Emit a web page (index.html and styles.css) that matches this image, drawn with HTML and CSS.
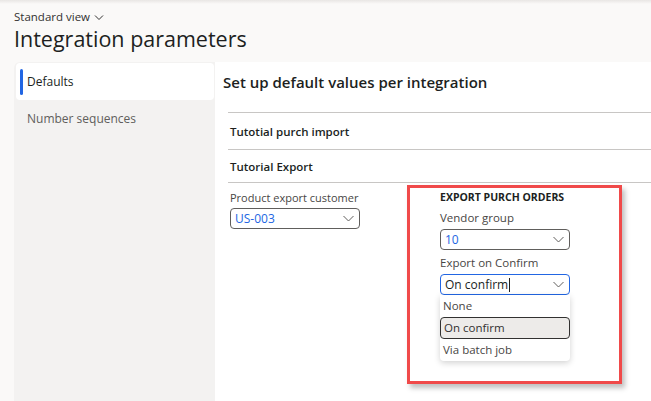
FILE: index.html
```html
<!DOCTYPE html>
<html>
<head>
<meta charset="utf-8">
<link rel="stylesheet" href="styles.css">
</head>
<body>
<div class="topbar"></div>
<header class="header">
  <div class="view">Standard view <svg class="chev-small" width="10" height="7" viewBox="0 0 10 7"><path d="M1 1.5 L5 5.5 L9 1.5" fill="none" stroke="#323130" stroke-width="1"/></svg></div>
  <h1 class="title">Integration parameters</h1>
</header>
<div class="layout">
  <nav class="nav">
    <div class="nav-item active"><span class="bar"></span>Defaults</div>
    <div class="nav-item">Number sequences</div>
  </nav>
  <main class="main">
    <h2 class="heading">Set up default values per integration</h2>
    <div class="sections">
      <div class="section">Tutotial purch import</div>
      <div class="section">Tutorial Export</div>
    </div>
    <div class="fields">
      <div class="col">
        <div class="label label-left">Product export customer</div>
        <div class="select"><span class="val">US-003</span><svg class="chev" width="11" height="7" viewBox="0 0 11 7"><path d="M0.5 1 L5.5 6 L10.5 1" fill="none" stroke="#605e5c" stroke-width="1"/></svg></div>
      </div>
      <div class="highlight">
        <div class="group-title">EXPORT PURCH ORDERS</div>
        <div class="label">Vendor group</div>
        <div class="select"><span class="val">10</span><svg class="chev" width="11" height="7" viewBox="0 0 11 7"><path d="M0.5 1 L5.5 6 L10.5 1" fill="none" stroke="#605e5c" stroke-width="1"/></svg></div>
        <div class="label label2">Export on Confirm</div>
        <div class="select focused"><span class="val dark">On confirm<span class="caret"></span></span><svg class="chev" width="11" height="7" viewBox="0 0 11 7"><path d="M0.5 1 L5.5 6 L10.5 1" fill="none" stroke="#605e5c" stroke-width="1"/></svg></div>
        <ul class="list">
          <li>None</li>
          <li class="sel">On confirm</li>
          <li>Via batch job</li>
        </ul>
      </div>
    </div>
  </main>
</div>
</body>
</html>
```

FILE: styles.css
```css
html, body {
  margin: 0;
  padding: 0;
}
body {
  width: 651px;
  height: 401px;
  overflow: hidden;
  background: #faf9f8;
  font-family: "Open Sans", "Noto Sans", sans-serif;
  color: #323130;
}
.topbar {
  height: 4px;
  background: linear-gradient(#e8e6e4, #faf9f8);
}
.header {
  padding-left: 14px;
}
.view {
  font-size: 11.5px;
  line-height: 16px;
  margin-top: 5px;
  color: #323130;
  display: flex;
  align-items: center;
  gap: 4px;
}
.title {
  margin: 0;
  font-size: 21.5px;
  font-weight: 400;
  line-height: 28px;
  color: #201f1e;
}
.layout {
  display: flex;
  margin-left: 14px;
  margin-top: 9px;
  height: 339px;
}
.nav {
  width: 201px;
  background: #f3f2f1;
  border-radius: 6px 0 0 0;
  padding: 1px 1px 0 2px;
  box-sizing: border-box;
}
.nav-item {
  position: relative;
  height: 37px;
  display: flex;
  align-items: center;
  padding-left: 11px;
  font-size: 12px;
  color: #605e5c;
}
.nav-item.active {
  background: #fff;
  border-radius: 4px;
  color: #201f1e;
}
.bar {
  position: absolute;
  left: 4px;
  top: 6px;
  width: 3px;
  height: 26px;
  border-radius: 2px;
  background: #2266e3;
}
.main {
  flex: 1;
  background: #fff;
  padding-left: 8px;
}
.heading {
  margin: 10px 0 0 0;
  font-size: 15px;
  font-weight: 600;
  line-height: 20px;
  color: #201f1e;
}
.sections {
  margin-top: 20px;
  margin-left: 5px;
}
.section {
  border-top: 1px solid #c8c6c4;
  height: 36px;
  display: flex;
  align-items: center;
  padding-left: 2px;
  font-size: 11.5px;
  font-weight: 600;
  color: #201f1e;
}
.section + .section {
  height: 32px;
}
.fields {
  border-top: 1px solid #c8c6c4;
  margin-left: 5px;
  display: flex;
  align-items: flex-start;
  gap: 47px;
  padding-top: 2px;
  padding-left: 2px;
}
.col {
  width: 130px;
  padding-top: 5px;
}
.label {
  font-size: 11.5px;
  line-height: 16px;
  color: #484644;
  margin-bottom: 3px;
  white-space: nowrap;
}
.label-left {
  margin-bottom: 2px;
  font-size: 11px;
}
.label2 {
  margin-top: 5px;
}
.select {
  height: 21px;
  box-sizing: border-box;
  border: 1px solid #605e5c;
  border-radius: 4px;
  display: flex;
  align-items: center;
  justify-content: space-between;
  padding: 0 5px 0 4px;
  width: 130px;
}
.select.focused {
  border-color: #2266e3;
}
.val {
  font-size: 12px;
  color: #2266e3;
  display: flex;
  align-items: center;
}
.val.dark {
  color: #201f1e;
}
.caret {
  display: inline-block;
  width: 1px;
  height: 14px;
  background: #201f1e;
  margin-left: 1px;
}
.highlight {
  border: 3px solid #f04a4a;
  width: 215px;
  height: 199px;
  box-sizing: border-box;
  padding: 1px 0 0 30px;
  box-shadow: 3px 4px 5px rgba(0, 0, 0, 0.25);
}
.group-title {
  font-size: 10.5px;
  font-weight: 700;
  line-height: 16px;
  color: #201f1e;
  margin-bottom: 5px;
}
.list {
  list-style: none;
  margin: 0;
  padding: 0;
  width: 130px;
  background: #fff;
  border-radius: 0 0 4px 4px;
  box-shadow: 0 2px 6px rgba(0, 0, 0, 0.18);
  font-size: 11.5px;
  color: #484644;
}
.list li {
  height: 22px;
  line-height: 22px;
  padding-left: 3px;
  box-sizing: border-box;
}
.list li.sel {
  background: #edebe9;
  border: 1px solid #323130;
  border-radius: 4px;
  line-height: 20px;
  color: #323130;
}
```
